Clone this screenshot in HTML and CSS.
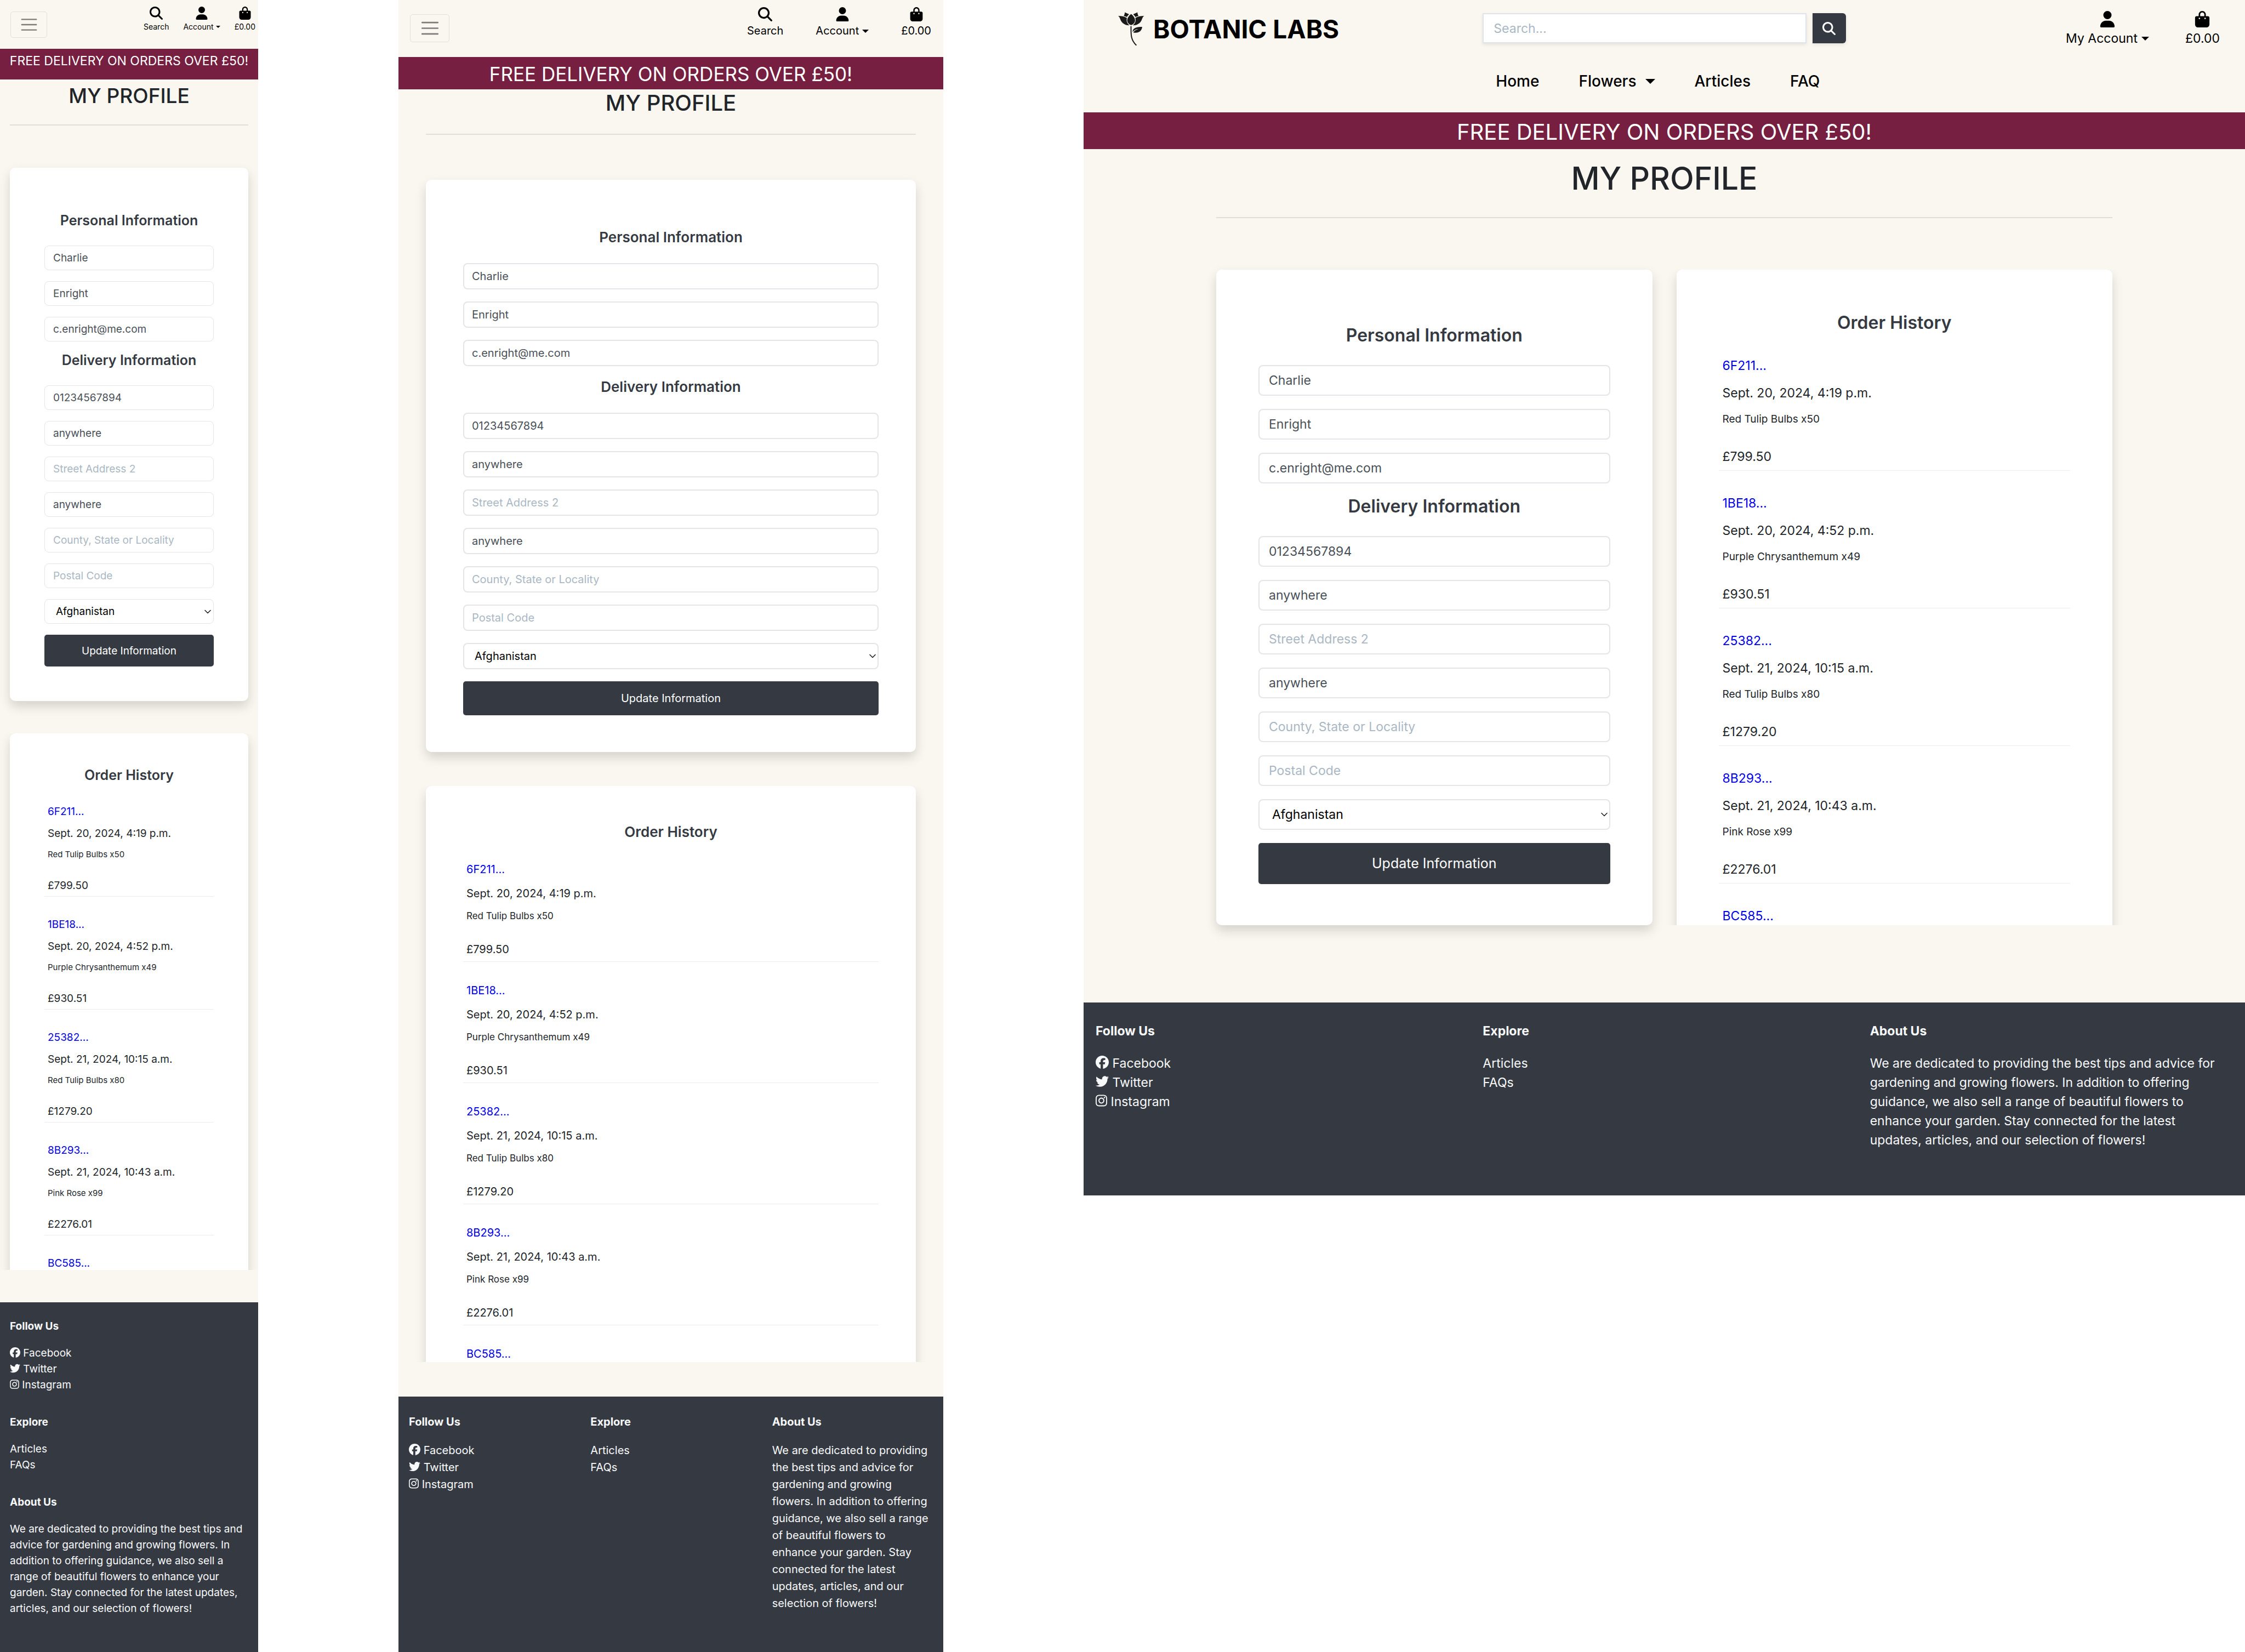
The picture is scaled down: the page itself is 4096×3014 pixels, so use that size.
FILE: index.html
```html
<!DOCTYPE html>
<html lang="en">
<head>
<meta charset="utf-8">
<meta name="viewport" content="width=device-width, initial-scale=1">
<title>Botanic Labs - My Profile</title>
<link rel="stylesheet" href="styles.css">
</head>
<body>
<svg class="sprite" aria-hidden="true">
  <symbol id="i-search" viewBox="0 0 512 512"><path d="M416 208c0 45.900-14.900 88.300-40 122.700L502.600 457.400c12.500 12.500 12.500 32.800 0 45.300s-32.800 12.500-45.300 0L330.700 376c-34.400 25.200-76.800 40-122.700 40C93.100 416 0 322.900 0 208S93.100 0 208 0S416 93.100 416 208zM208 352a144 144 0 1 0 0-288 144 144 0 1 0 0 288z"/></symbol>
  <symbol id="i-user" viewBox="0 0 448 512"><path d="M224 256A128 128 0 1 0 224 0a128 128 0 1 0 0 256zm-45.700 48C79.800 304 0 383.800 0 482.300C0 498.700 13.300 512 29.700 512l388.600 0c16.400 0 29.700-13.300 29.700-29.700C448 383.800 368.200 304 269.700 304l-91.400 0z"/></symbol>
  <symbol id="i-bag" viewBox="0 0 448 512"><path d="M160 112c0-35.300 28.700-64 64-64s64 28.700 64 64l0 48-128 0 0-48zm-48 48l-64 0c-26.500 0-48 21.500-48 48L0 416c0 53 43 96 96 96l256 0c53 0 96-43 96-96l0-208c0-26.500-21.500-48-48-48l-64 0 0-48C336 50.100 285.900 0 224 0S112 50.100 112 112l0 48zm24 48a24 24 0 1 1 0 48 24 24 0 1 1 0-48zm152 24a24 24 0 1 1 48 0 24 24 0 1 1 -48 0z"/></symbol>
  <symbol id="i-facebook" viewBox="0 0 512 512"><path d="M512 256C512 114.600 397.400 0 256 0S0 114.600 0 256C0 376 82.700 476.800 194.200 504.500V334.200H141.400V256h52.800V222.300c0-87.100 39.400-127.500 125-127.500c16.200 0 44.200 3.200 55.700 6.400V172c-6-.6-16.500-1-29.600-1c-42 0-58.200 15.900-58.200 57.200V256h83.600l-14.400 78.200H287V510.100C413.800 494.800 512 386.900 512 256h0z"/></symbol>
  <symbol id="i-twitter" viewBox="0 0 512 512"><path d="M459.370 151.716c.325 4.548.325 9.097.325 13.645 0 138.720-105.583 298.558-298.558 298.558-59.452 0-114.680-17.219-161.137-47.106 8.447.974 16.568 1.299 25.340 1.299 49.055 0 94.213-16.568 130.274-44.832-46.132-.975-84.792-31.188-98.112-72.772 6.498.974 12.995 1.624 19.818 1.624 9.421 0 18.843-1.300 27.614-3.573-48.081-9.747-84.143-51.980-84.143-102.985v-1.299c13.969 7.797 30.214 12.670 47.431 13.319-28.264-18.843-46.781-51.005-46.781-87.391 0-19.492 5.197-37.360 14.294-52.954 51.655 63.675 129.300 105.258 216.365 109.807-1.624-7.797-2.599-15.918-2.599-24.040 0-57.828 46.782-104.934 104.934-104.934 30.213 0 57.502 12.670 76.670 33.137 23.715-4.548 46.456-13.320 66.599-25.340-7.798 24.366-24.366 44.833-46.132 57.827 21.117-2.273 41.584-8.122 60.426-16.243-14.292 20.791-32.161 39.308-52.628 54.253z"/></symbol>
  <symbol id="i-instagram" viewBox="0 0 448 512"><path d="M224.100 141c-63.600 0-114.900 51.300-114.900 114.900s51.300 114.900 114.900 114.900S339 319.500 339 255.900 287.700 141 224.100 141zm0 189.600c-41.100 0-74.700-33.500-74.700-74.700s33.500-74.700 74.700-74.700 74.700 33.500 74.700 74.700-33.600 74.700-74.700 74.700zm146.400-194.300c0 14.900-12 26.800-26.800 26.800-14.900 0-26.800-12-26.800-26.800s12-26.800 26.800-26.800 26.800 12 26.800 26.800zm76.100 27.200c-1.700-35.900-9.900-67.700-36.200-93.900-26.200-26.200-58-34.400-93.900-36.200-37-2.100-147.900-2.100-184.900 0-35.800 1.700-67.600 9.900-93.900 36.100s-34.400 58-36.200 93.900c-2.100 37-2.100 147.900 0 184.900 1.700 35.900 9.900 67.700 36.200 93.900s58 34.400 93.900 36.200c37 2.100 147.900 2.100 184.900 0 35.900-1.700 67.700-9.900 93.900-36.200 26.200-26.200 34.400-58 36.200-93.900 2.100-37 2.100-147.800 0-184.800zM398.800 388c-7.800 19.600-22.900 34.700-42.600 42.600-29.500 11.700-99.500 9-132.100 9s-102.700 2.600-132.100-9c-19.600-7.800-34.700-22.900-42.600-42.600-11.700-29.500-9-99.500-9-132.100s-2.600-102.700 9-132.100c7.800-19.600 22.900-34.700 42.600-42.600 29.500-11.700 99.500-9 132.100-9s102.700-2.600 132.100 9c19.600 7.800 34.700 22.900 42.600 42.600 11.700 29.500 9 99.500 9 132.100s2.700 102.700-9 132.100z"/></symbol>
  <symbol id="i-chevron" viewBox="0 0 12 8"><path d="M1 1.500 6 6.500 11 1.500" fill="none" stroke="currentColor" stroke-width="1.600" stroke-linecap="round" stroke-linejoin="round"/></symbol>
  <symbol id="i-menu" viewBox="0 0 30 30"><path d="M4 7h22M4 15h22M4 23h22" fill="none" stroke="currentColor" stroke-width="2" stroke-linecap="round"/></symbol>
</svg>

<article class="page page--mobile">
  <header class="topbar">
    <button class="toggler" type="button" aria-label="Toggle navigation"><svg class="toggler__icon"><use href="#i-menu"/></svg></button>
    <nav class="actions" aria-label="Account">
      <button class="action" type="button"><svg class="action__icon"><use href="#i-search"/></svg><span>Search</span></button>
      <button class="action" type="button"><svg class="action__icon"><use href="#i-user"/></svg><span class="caret">Account</span></button>
      <a class="action" href="#bag"><svg class="action__icon"><use href="#i-bag"/></svg><span>£0.00</span></a>
    </nav>
  </header>
  <p class="banner">FREE DELIVERY ON ORDERS OVER £50!</p>
  <main class="main">
    <h1 class="title">MY PROFILE</h1>
    <hr class="rule">
    <div class="cards">
      <form class="card profile">
        <h2 class="card__title">Personal Information</h2>
        <input class="field" type="text" aria-label="First name" value="Charlie">
        <input class="field" type="text" aria-label="Last name" value="Enright">
        <input class="field" type="email" aria-label="Email" value="c.enright@me.com">
        <h2 class="card__title">Delivery Information</h2>
        <input class="field" type="tel" aria-label="Phone number" value="01234567894">
        <input class="field" type="text" aria-label="Street address 1" value="anywhere">
        <input class="field" type="text" aria-label="Street address 2" placeholder="Street Address 2">
        <input class="field" type="text" aria-label="Town or city" value="anywhere">
        <input class="field" type="text" aria-label="County" placeholder="County, State or Locality">
        <input class="field" type="text" aria-label="Postal code" placeholder="Postal Code">
        <div class="select"><select class="field select__box" aria-label="Country"><option>Afghanistan</option></select><svg class="select__arrow"><use href="#i-chevron"/></svg></div>
        <button class="submit" type="submit">Update Information</button>
      </form>
      <section class="orders">
        <div class="card orders__card">
          <h2 class="card__title">Order History</h2>
          <ul class="orders__list">
            <li class="order"><a class="order__id" href="#6F211">6F211...</a><p class="order__date">Sept. 20, 2024, 4:19 p.m.</p><p class="order__item">Red Tulip Bulbs x50</p><p class="order__total">£799.50</p></li>
            <li class="order"><a class="order__id" href="#1BE18">1BE18...</a><p class="order__date">Sept. 20, 2024, 4:52 p.m.</p><p class="order__item">Purple Chrysanthemum x49</p><p class="order__total">£930.51</p></li>
            <li class="order"><a class="order__id" href="#25382">25382...</a><p class="order__date">Sept. 21, 2024, 10:15 a.m.</p><p class="order__item">Red Tulip Bulbs x80</p><p class="order__total">£1279.20</p></li>
            <li class="order"><a class="order__id" href="#8B293">8B293...</a><p class="order__date">Sept. 21, 2024, 10:43 a.m.</p><p class="order__item">Pink Rose x99</p><p class="order__total">£2276.01</p></li>
            <li class="order"><a class="order__id" href="#BC585">BC585...</a></li>
          </ul>
        </div>
      </section>
    </div>
  </main>
  <footer class="footer">
    <section class="footer__col">
      <h2 class="footer__title">Follow Us</h2>
      <ul class="footer__list">
        <li><a class="footer__link" href="#facebook"><svg class="footer__icon"><use href="#i-facebook"/></svg> Facebook</a></li>
        <li><a class="footer__link" href="#twitter"><svg class="footer__icon"><use href="#i-twitter"/></svg> Twitter</a></li>
        <li><a class="footer__link" href="#instagram"><svg class="footer__icon footer__icon--narrow"><use href="#i-instagram"/></svg> Instagram</a></li>
      </ul>
    </section>
    <section class="footer__col">
      <h2 class="footer__title">Explore</h2>
      <ul class="footer__list">
        <li><a class="footer__link" href="#articles">Articles</a></li>
        <li><a class="footer__link" href="#faqs">FAQs</a></li>
      </ul>
    </section>
    <section class="footer__col">
      <h2 class="footer__title">About Us</h2>
      <p class="footer__text">We are dedicated to providing the best tips and advice for gardening and growing flowers. In addition to offering guidance, we also sell a range of beautiful flowers to enhance your garden. Stay connected for the latest updates, articles, and our selection of flowers!</p>
    </section>
  </footer>
</article>

<article class="page page--tablet">
  <header class="topbar">
    <button class="toggler" type="button" aria-label="Toggle navigation"><svg class="toggler__icon"><use href="#i-menu"/></svg></button>
    <nav class="actions" aria-label="Account">
      <button class="action" type="button"><svg class="action__icon"><use href="#i-search"/></svg><span>Search</span></button>
      <button class="action" type="button"><svg class="action__icon"><use href="#i-user"/></svg><span class="caret">Account</span></button>
      <a class="action" href="#bag"><svg class="action__icon"><use href="#i-bag"/></svg><span>£0.00</span></a>
    </nav>
  </header>
  <p class="banner">FREE DELIVERY ON ORDERS OVER £50!</p>
  <main class="main">
    <h1 class="title">MY PROFILE</h1>
    <hr class="rule">
    <div class="cards">
      <form class="card profile">
        <h2 class="card__title">Personal Information</h2>
        <input class="field" type="text" aria-label="First name" value="Charlie">
        <input class="field" type="text" aria-label="Last name" value="Enright">
        <input class="field" type="email" aria-label="Email" value="c.enright@me.com">
        <h2 class="card__title">Delivery Information</h2>
        <input class="field" type="tel" aria-label="Phone number" value="01234567894">
        <input class="field" type="text" aria-label="Street address 1" value="anywhere">
        <input class="field" type="text" aria-label="Street address 2" placeholder="Street Address 2">
        <input class="field" type="text" aria-label="Town or city" value="anywhere">
        <input class="field" type="text" aria-label="County" placeholder="County, State or Locality">
        <input class="field" type="text" aria-label="Postal code" placeholder="Postal Code">
        <div class="select"><select class="field select__box" aria-label="Country"><option>Afghanistan</option></select><svg class="select__arrow"><use href="#i-chevron"/></svg></div>
        <button class="submit" type="submit">Update Information</button>
      </form>
      <section class="orders">
        <div class="card orders__card">
          <h2 class="card__title">Order History</h2>
          <ul class="orders__list">
            <li class="order"><a class="order__id" href="#6F211">6F211...</a><p class="order__date">Sept. 20, 2024, 4:19 p.m.</p><p class="order__item">Red Tulip Bulbs x50</p><p class="order__total">£799.50</p></li>
            <li class="order"><a class="order__id" href="#1BE18">1BE18...</a><p class="order__date">Sept. 20, 2024, 4:52 p.m.</p><p class="order__item">Purple Chrysanthemum x49</p><p class="order__total">£930.51</p></li>
            <li class="order"><a class="order__id" href="#25382">25382...</a><p class="order__date">Sept. 21, 2024, 10:15 a.m.</p><p class="order__item">Red Tulip Bulbs x80</p><p class="order__total">£1279.20</p></li>
            <li class="order"><a class="order__id" href="#8B293">8B293...</a><p class="order__date">Sept. 21, 2024, 10:43 a.m.</p><p class="order__item">Pink Rose x99</p><p class="order__total">£2276.01</p></li>
            <li class="order"><a class="order__id" href="#BC585">BC585...</a></li>
          </ul>
        </div>
      </section>
    </div>
  </main>
  <footer class="footer">
    <section class="footer__col">
      <h2 class="footer__title">Follow Us</h2>
      <ul class="footer__list">
        <li><a class="footer__link" href="#facebook"><svg class="footer__icon"><use href="#i-facebook"/></svg> Facebook</a></li>
        <li><a class="footer__link" href="#twitter"><svg class="footer__icon"><use href="#i-twitter"/></svg> Twitter</a></li>
        <li><a class="footer__link" href="#instagram"><svg class="footer__icon footer__icon--narrow"><use href="#i-instagram"/></svg> Instagram</a></li>
      </ul>
    </section>
    <section class="footer__col">
      <h2 class="footer__title">Explore</h2>
      <ul class="footer__list">
        <li><a class="footer__link" href="#articles">Articles</a></li>
        <li><a class="footer__link" href="#faqs">FAQs</a></li>
      </ul>
    </section>
    <section class="footer__col">
      <h2 class="footer__title">About Us</h2>
      <p class="footer__text">We are dedicated to providing the best tips and advice for gardening and growing flowers. In addition to offering guidance, we also sell a range of beautiful flowers to enhance your garden. Stay connected for the latest updates, articles, and our selection of flowers!</p>
    </section>
  </footer>
</article>

<article class="page page--desktop">
  <header class="masthead">
    <a class="brand" href="#home">
      <svg class="brand__mark" viewBox="39 42 194 252" aria-hidden="true">
        <g fill="#1b1b1b">
          <path d="M135 56C116 71 106 87 106 103c0 17 12 31 29 36 17-5 29-19 29-36 0-16-10-32-29-47z"/>
          <path d="M39 70c24 0 46 4 65 16-6 20 0 40 18 54-22 2-46-9-59-28-9-13-10-31-24-42z"/>
          <path d="M231 70c-24 0-46 4-65 16 6 20 0 40-18 54 22 2 46-9 59-28 9-13 10-31 24-42z"/>
          <path d="M88 44l32 14c-7 6-13 13-16 21-7-4-15-7-24-8 5-8 8-17 8-27z"/>
          <path d="M182 44l-32 14c7 6 13 13 16 21 7-4 15-7 24-8-5-8-8-17-8-27z"/>
          <path d="M146 190c0-26 22-40 71-38-3 32-28 50-66 42 8-15 22-22 38-26-18 0-32 8-43 22z"/>
        </g>
        <path d="M134 147c1 50-7 97 40 142" fill="none" stroke="#1b1b1b" stroke-width="8"/>
      </svg>
      <span class="brand__name">BOTANIC LABS</span>
    </a>
    <form class="search" role="search">
      <input class="search__box" type="search" aria-label="Search" placeholder="Search...">
      <button class="search__go" type="submit" aria-label="Submit search"><svg class="search__icon"><use href="#i-search"/></svg></button>
    </form>
    <nav class="actions" aria-label="Account">
      <button class="action" type="button"><svg class="action__icon"><use href="#i-user"/></svg><span class="caret">My Account</span></button>
      <a class="action" href="#bag"><svg class="action__icon"><use href="#i-bag"/></svg><span>£0.00</span></a>
    </nav>
    <nav class="menu" aria-label="Main">
      <a class="menu__link" href="#home">Home</a>
      <a class="menu__link menu__link--drop" href="#flowers">Flowers</a>
      <a class="menu__link" href="#articles">Articles</a>
      <a class="menu__link" href="#faq">FAQ</a>
    </nav>
  </header>
  <p class="banner">FREE DELIVERY ON ORDERS OVER £50!</p>
  <main class="main">
    <h1 class="title">MY PROFILE</h1>
    <hr class="rule">
    <div class="cards">
      <form class="card profile">
        <h2 class="card__title">Personal Information</h2>
        <input class="field" type="text" aria-label="First name" value="Charlie">
        <input class="field" type="text" aria-label="Last name" value="Enright">
        <input class="field" type="email" aria-label="Email" value="c.enright@me.com">
        <h2 class="card__title">Delivery Information</h2>
        <input class="field" type="tel" aria-label="Phone number" value="01234567894">
        <input class="field" type="text" aria-label="Street address 1" value="anywhere">
        <input class="field" type="text" aria-label="Street address 2" placeholder="Street Address 2">
        <input class="field" type="text" aria-label="Town or city" value="anywhere">
        <input class="field" type="text" aria-label="County" placeholder="County, State or Locality">
        <input class="field" type="text" aria-label="Postal code" placeholder="Postal Code">
        <div class="select"><select class="field select__box" aria-label="Country"><option>Afghanistan</option></select><svg class="select__arrow"><use href="#i-chevron"/></svg></div>
        <button class="submit" type="submit">Update Information</button>
      </form>
      <section class="orders">
        <div class="card orders__card">
          <h2 class="card__title">Order History</h2>
          <ul class="orders__list">
            <li class="order"><a class="order__id" href="#6F211">6F211...</a><p class="order__date">Sept. 20, 2024, 4:19 p.m.</p><p class="order__item">Red Tulip Bulbs x50</p><p class="order__total">£799.50</p></li>
            <li class="order"><a class="order__id" href="#1BE18">1BE18...</a><p class="order__date">Sept. 20, 2024, 4:52 p.m.</p><p class="order__item">Purple Chrysanthemum x49</p><p class="order__total">£930.51</p></li>
            <li class="order"><a class="order__id" href="#25382">25382...</a><p class="order__date">Sept. 21, 2024, 10:15 a.m.</p><p class="order__item">Red Tulip Bulbs x80</p><p class="order__total">£1279.20</p></li>
            <li class="order"><a class="order__id" href="#8B293">8B293...</a><p class="order__date">Sept. 21, 2024, 10:43 a.m.</p><p class="order__item">Pink Rose x99</p><p class="order__total">£2276.01</p></li>
            <li class="order"><a class="order__id" href="#BC585">BC585...</a></li>
          </ul>
        </div>
      </section>
    </div>
  </main>
  <footer class="footer">
    <section class="footer__col">
      <h2 class="footer__title">Follow Us</h2>
      <ul class="footer__list">
        <li><a class="footer__link" href="#facebook"><svg class="footer__icon"><use href="#i-facebook"/></svg> Facebook</a></li>
        <li><a class="footer__link" href="#twitter"><svg class="footer__icon"><use href="#i-twitter"/></svg> Twitter</a></li>
        <li><a class="footer__link" href="#instagram"><svg class="footer__icon footer__icon--narrow"><use href="#i-instagram"/></svg> Instagram</a></li>
      </ul>
    </section>
    <section class="footer__col">
      <h2 class="footer__title">Explore</h2>
      <ul class="footer__list">
        <li><a class="footer__link" href="#articles">Articles</a></li>
        <li><a class="footer__link" href="#faqs">FAQs</a></li>
      </ul>
    </section>
    <section class="footer__col">
      <h2 class="footer__title">About Us</h2>
      <p class="footer__text">We are dedicated to providing the best tips and advice for gardening and growing flowers. In addition to offering guidance, we also sell a range of beautiful flowers to enhance your garden. Stay connected for the latest updates, articles, and our selection of flowers!</p>
    </section>
  </footer>
</article>
</body>
</html>
```
FILE: styles.css
```css
*, *::before, *::after { box-sizing: border-box; }

body {
  margin: 0;
  min-height: 100vh;
  display: grid;
  grid-template-columns: minmax(0, 471fr) minmax(0, 994fr) minmax(0, 2119fr);
  column-gap: 256px;
  background: #fff;
  font-family: Inter, "Liberation Sans", sans-serif;
}

h1, h2, p, ul { margin: 0; padding: 0; }
ul { list-style: none; }
a { color: inherit; text-decoration: none; }
button, input, select { font: inherit; }
svg { display: block; fill: currentColor; }
.sprite { position: absolute; width: 0; height: 0; }

/* ---- one set of measures per breakpoint ---- */

.page--mobile {
  --text: 19px; --line: 29px; --small: 15px; --action: 14px; --action-line: 22px;
  --heading: 25px; --title: 37px; --title-line: 47px; --title-top: 6px;
  --banner: 23px; --banner-line: 29px; --banner-pad: 8px 0 19px;
  --rule-top: 29px; --rule-bottom: 77px; --gutter: 18px; --side: 63px;
  --icon: 24px; --action-gap: 26px; --button-text: 19px;
  --form-top: 82px; --form-bottom: 63px; --form-gap: 20px; --heading-bottom: 11px;
  --field: 45px; --field-pad: 14px; --select-pad: 19px; --button: 58px;
  --card-gap: 59px; --orders: 979px; --orders-top: 62px; --orders-first: 1px;
  --order-top: 36px; --order-gap: 11px; --item-gap: 9px; --total-gap: 28px; --order-bottom: 5px; --order-pad: 6px;
  --footer-top: 29px; --footer-gap: 20px; --footer-bottom: 67px; --footer-side: 18px;
  --social: 19px; --social-narrow: 17px; --caret: 4px;
}

.page--tablet {
  --text: 20px; --line: 31px; --small: 17px; --action: 20px; --action-line: 31px;
  --heading: 26px; --title: 40px; --title-line: 50px; --title-top: 0;
  --banner: 35px; --banner-line: 43px; --banner-pad: 10px 0 6px;
  --rule-top: 31px; --rule-bottom: 82px; --gutter: 50px; --side: 68px;
  --icon: 26px; --action-gap: 59px; --button-text: 20px;
  --form-top: 89px; --form-bottom: 67px; --form-gap: 22px; --heading-bottom: 10px;
  --field: 48px; --field-pad: 14px; --select-pad: 19px; --button: 62px;
  --card-gap: 62px; --orders: 1051px; --orders-top: 68px; --orders-first: 1px;
  --order-top: 37px; --order-gap: 13px; --item-gap: 10px; --total-gap: 30px; --order-bottom: 6px; --order-pad: 6px;
  --footer-top: 31px; --footer-gap: 21px; --footer-bottom: 67px; --footer-side: 19px;
  --social: 21px; --social-narrow: 18px; --caret: 6px;
}

.page--desktop {
  --text: 23px; --line: 35px; --small: 19px; --action: 23px; --action-line: 35px;
  --heading: 32px; --title: 57px; --title-line: 71px; --title-top: 18px;
  --banner: 40px; --banner-line: 49px; --banner-pad: 11px 0 7px;
  --rule-top: 35px; --rule-bottom: 94px; --gutter: 242px; --side: 77px;
  --icon: 30px; --action-gap: 66px; --button-text: 25px;
  --form-top: 102px; --form-bottom: 75px; --form-gap: 24px; --heading-bottom: 13px;
  --field: 56px; --field-pad: 17px; --select-pad: 23px; --button: 75px;
  --card-gap: 44px; --orders: 1196px; --orders-top: 79px; --orders-first: 2px;
  --order-top: 42px; --order-gap: 15px; --item-gap: 12px; --total-gap: 34px; --order-bottom: 7px; --order-pad: 7px;
  --footer-top: 35px; --footer-gap: 24px; --footer-bottom: 83px; --footer-side: 22px;
  --social: 24px; --social-narrow: 21px; --caret: 7px;
}

.page {
  display: flex;
  flex-direction: column;
  background: #faf7f0;
  color: #212529;
  font-size: var(--text);
  line-height: var(--line);
}
.page--desktop { align-self: start; }

/* ---- header ---- */

.topbar { display: flex; justify-content: space-between; align-items: flex-start; }
.page--mobile .topbar { padding: 12px 5px 20px 19px; }
.page--tablet .topbar { padding: 13px 22px 27px 21px; }

.toggler {
  display: grid;
  place-items: center;
  padding: 0;
  border: 1px solid #e3e0da;
  border-radius: 5px;
  background: none;
  color: #7d7c78;
}
.page--mobile .toggler { width: 67px; height: 48px; margin-top: 9px; }
.page--tablet .toggler { width: 72px; height: 51px; margin-top: 13px; }
.page--mobile .toggler__icon { width: 36px; height: 36px; }
.page--tablet .toggler__icon { width: 39px; height: 39px; }

.actions { display: flex; gap: var(--action-gap); color: #000; font-size: var(--action); line-height: var(--action-line); }
.action { display: flex; flex-direction: column; align-items: center; gap: 2px; padding: 0; border: 0; background: none; color: #000; }
.page--desktop .action { gap: 3px; }
.action__icon { width: var(--icon); height: var(--icon); }
.caret { display: flex; align-items: center; gap: var(--caret); }
.caret::after, .menu__link--drop::after {
  content: "";
  border: var(--caret) solid transparent;
  border-top-width: var(--caret);
  border-bottom: 0;
  border-top-color: #000;
}

.masthead { display: grid; grid-template-columns: repeat(3, minmax(0, 1fr)); align-items: start; row-gap: 39px; padding: 20px 0 36px; }
.brand { display: flex; align-items: center; gap: 16px; margin: 2px 0 0 63px; color: #000; }
.brand__mark { width: 48px; height: 62px; }
.brand__name { font-size: 46px; font-weight: 700; line-height: 56px; }
.search { display: flex; gap: 11px; margin: 4px 22px 0; }
.search__box {
  flex: 1;
  min-width: 0;
  height: 55px;
  padding: 0 18px;
  border: 2px solid #dfe3ea;
  border-radius: 0;
  background: #fff;
  color: #495057;
  box-shadow: 0 3px 6px rgba(0, 0, 0, .08);
  appearance: none;
}
.search__go { display: grid; place-items: center; width: 61px; height: 55px; padding: 0; border: 0; border-radius: 0 6px 6px 0; background: #353a42; color: #fff; box-shadow: 0 3px 6px rgba(0, 0, 0, .08); }
.search__icon { width: 24px; height: 24px; }
.page--desktop .actions { justify-content: flex-end; padding-right: 46px; }
.menu { grid-column: 2; display: flex; gap: 72px; padding-left: 46px; color: #000; font-size: 28px; font-weight: 500; line-height: 42px; white-space: nowrap; }
.menu__link--drop { display: flex; align-items: center; gap: 16px; }
.menu__link--drop::after { border-width: 9px 9px 0; }

.banner { padding: var(--banner-pad); background: #761f41; color: #fff; font-size: var(--banner); line-height: var(--banner-line); text-align: center; white-space: nowrap; }

/* ---- profile ---- */

.main { padding: 0 var(--gutter); }
.title { margin-top: var(--title-top); font-size: var(--title); font-weight: 500; line-height: var(--title-line); text-align: center; }
.rule { height: 2px; margin: var(--rule-top) 0 var(--rule-bottom); border: 0; background: #e2dfd9; }

.cards { display: grid; gap: var(--card-gap); }
.page--desktop .cards { grid-template-columns: 1fr 1fr; }
.card { padding: 0 var(--side); border-radius: 10px; background: #fff; box-shadow: 0 10px 20px rgba(0, 0, 0, .15); }
.card__title { color: #353a42; font-size: var(--heading); font-weight: 600; line-height: var(--line); text-align: center; white-space: nowrap; }

.profile { display: flex; flex-direction: column; gap: var(--form-gap); padding-top: var(--form-top); padding-bottom: var(--form-bottom); }
.profile .card__title { margin-bottom: var(--heading-bottom); }
.field { width: 100%; height: var(--field); padding: 0 var(--field-pad); border: 2px solid #e4e5e8; border-radius: 8px; background: #fff; color: #495057; }
.page--mobile .field { border-width: 1px; padding-left: 15px; }
.field::placeholder, .search__box::placeholder { color: #aab7c4; opacity: 1; }
.select { display: grid; align-items: center; }
.select__box { grid-area: 1 / 1; padding: 0 var(--select-pad); color: #000; appearance: none; }
.page--mobile .select__box { padding-left: 20px; color: #000; }
.select__arrow { grid-area: 1 / 1; justify-self: end; width: 12px; height: 8px; margin-right: 5px; color: #222; pointer-events: none; }
.submit { height: var(--button); padding: 0; border: 0; border-radius: 5px; background: #353a42; color: #fff; font-size: var(--button-text); }

/* ---- order history: scroll area cut off at a set height ---- */

.orders { height: var(--orders); margin: 0 -20px; padding: 0 20px; overflow: hidden; }
.page--mobile .orders { margin: 0 -18px; padding: 0 18px; }
.orders__card { padding-top: var(--orders-top); padding-bottom: 60px; }
.orders__list { padding-top: var(--orders-first); }
.order { padding: var(--order-top) var(--order-pad) var(--order-bottom); border-bottom: 1px solid #ececee; }
.order:last-child { border-bottom: 0; }
.order__id { display: block; color: #00e; }
.order__date { margin-top: var(--order-gap); }
.order__item { margin-top: var(--item-gap); font-size: var(--small); }
.order__total { margin-top: var(--total-gap); }

/* ---- footer ---- */

.footer { flex: 1; display: grid; align-content: start; padding: var(--footer-top) 0 var(--footer-bottom); background: #353a42; color: #f8f9fa; }
.page--mobile .footer { margin-top: 59px; row-gap: 39px; }
.page--tablet .footer { margin-top: 63px; grid-template-columns: repeat(3, minmax(0, 1fr)); }
.page--desktop .footer { margin-top: 141px; grid-template-columns: repeat(3, minmax(0, 1fr)); }
.footer__col { padding: 0 var(--footer-side); }
.footer__title { margin-bottom: var(--footer-gap); font-size: var(--text); font-weight: 700; line-height: var(--line); }
.footer__text { max-width: 28em; }
.footer__icon { display: inline-block; width: var(--social); height: var(--social); vertical-align: -2px; }
.footer__icon--narrow { width: var(--social-narrow); }
```
